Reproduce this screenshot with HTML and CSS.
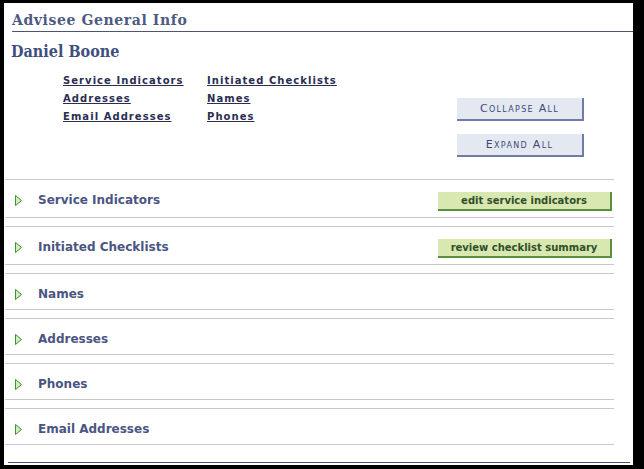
FILE: index.html
```html
<!DOCTYPE html>
<html>
<head>
<meta charset="utf-8">
<link rel="stylesheet" href="styles.css">
</head>
<body>
<div class="panel">
  <div class="page-head"><h1 class="page-title">Advisee General Info</h1></div>
  <h2 class="person">Daniel Boone</h2>
  <div class="top">
    <div class="links">
      <a href="#" class="link">Service Indicators</a>
      <a href="#" class="link">Initiated Checklists</a>
      <a href="#" class="link">Addresses</a>
      <a href="#" class="link">Names</a>
      <a href="#" class="link">Email Addresses</a>
      <a href="#" class="link">Phones</a>
    </div>
    <div class="toggles">
      <button class="btn-blue">Collapse All</button>
      <button class="btn-blue">Expand All</button>
    </div>
  </div>
  <div class="sections">
    <div class="section">
      <div class="sec-row">
        <svg class="tri" width="7" height="11" viewBox="0 0 7 11"><polygon points="0.5,0.5 6.5,5.5 0.5,10.5" fill="#cfeebb" stroke="#3f8f33" stroke-width="1"/></svg>
        <span class="sec-title">Service Indicators</span>
        <button class="btn-green">edit service indicators</button>
      </div>
    </div>
    <div class="section">
      <div class="sec-row">
        <svg class="tri" width="7" height="11" viewBox="0 0 7 11"><polygon points="0.5,0.5 6.5,5.5 0.5,10.5" fill="#cfeebb" stroke="#3f8f33" stroke-width="1"/></svg>
        <span class="sec-title">Initiated Checklists</span>
        <button class="btn-green">review checklist summary</button>
      </div>
    </div>
    <div class="section">
      <div class="sec-row">
        <svg class="tri" width="7" height="11" viewBox="0 0 7 11"><polygon points="0.5,0.5 6.5,5.5 0.5,10.5" fill="#cfeebb" stroke="#3f8f33" stroke-width="1"/></svg>
        <span class="sec-title">Names</span>
      </div>
    </div>
    <div class="section">
      <div class="sec-row">
        <svg class="tri" width="7" height="11" viewBox="0 0 7 11"><polygon points="0.5,0.5 6.5,5.5 0.5,10.5" fill="#cfeebb" stroke="#3f8f33" stroke-width="1"/></svg>
        <span class="sec-title">Addresses</span>
      </div>
    </div>
    <div class="section">
      <div class="sec-row">
        <svg class="tri" width="7" height="11" viewBox="0 0 7 11"><polygon points="0.5,0.5 6.5,5.5 0.5,10.5" fill="#cfeebb" stroke="#3f8f33" stroke-width="1"/></svg>
        <span class="sec-title">Phones</span>
      </div>
    </div>
    <div class="section">
      <div class="sec-row">
        <svg class="tri" width="7" height="11" viewBox="0 0 7 11"><polygon points="0.5,0.5 6.5,5.5 0.5,10.5" fill="#cfeebb" stroke="#3f8f33" stroke-width="1"/></svg>
        <span class="sec-title">Email Addresses</span>
      </div>
    </div>
  </div>
  <div class="foot-line"></div>
</div>
</body>
</html>
```
FILE: styles.css
```css
html, body {
  margin: 0;
  padding: 0;
  background: #000;
}
body {
  padding: 3px 11px 4px 4px;
  width: 629px;
}
.panel {
  background: #fff;
  width: 629px;
  height: 462px;
  overflow: hidden;
  display: flex;
  flex-direction: column;
}
.page-head {
  margin: 7px 0 0 8px;
  padding-bottom: 1px;
  border-bottom: 1px solid #4d5670;
}
.page-title {
  margin: 0;
  font-family: "DejaVu Serif", serif;
  font-weight: bold;
  font-size: 14px;
  line-height: 20px;
  letter-spacing: 0.6px;
  color: #4d5a82;
}
.person {
  margin: 9px 0 0 7px;
  font-family: "DejaVu Serif Condensed", "DejaVu Serif", serif;
  font-stretch: condensed;
  font-weight: bold;
  font-size: 16px;
  line-height: 22px;
  color: #3e4f7d;
}
.top {
  display: flex;
  margin-top: 9px;
}
.links {
  display: grid;
  grid-template-columns: 144px auto;
  grid-auto-rows: 18px;
  margin-left: 59px;
  align-content: start;
}
.link {
  font-family: "DejaVu Sans", sans-serif;
  font-weight: bold;
  font-size: 10px;
  letter-spacing: 1.05px;
  line-height: 18px;
  color: #2b2e50;
  text-decoration: underline;
}
.toggles {
  margin-left: auto;
  margin-right: 49px;
  padding-top: 26px;
  display: flex;
  flex-direction: column;
  gap: 13px;
}
.btn-blue {
  width: 127px;
  height: 23px;
  padding: 0;
  margin: 0;
  background: #e4e8f1;
  border: none;
  border-right: 2px solid #6f7ca6;
  border-bottom: 2px solid #6f7ca6;
  font-family: "DejaVu Sans", sans-serif;
  font-variant: small-caps;
  font-size: 11px;
  letter-spacing: 1.3px;
  color: #3d4a7a;
}
.sections {
  margin: 22px 0 0 1px;
  width: 609px;
  display: flex;
  flex-direction: column;
  gap: 8px;
}
.section {
  border-top: 1px solid #c8c9cc;
  border-bottom: 1px solid #c8c9cc;
}
.sec-row {
  display: flex;
  align-items: flex-start;
  padding: 12px 0 6px 0;
}
.tri {
  margin: 3px 0 0 10px;
  flex: none;
}
.sec-title {
  margin-left: 16px;
  font-family: "DejaVu Sans", sans-serif;
  font-weight: bold;
  font-size: 12px;
  line-height: 17px;
  color: #4b5583;
}
.btn-green {
  margin: 0 2px 0 auto;
  width: 174px;
  height: 19px;
  padding: 0;
  background: #d8e8b0;
  border: none;
  border-right: 2px solid #5a8f3c;
  border-bottom: 2px solid #5a8f3c;
  font-family: "DejaVu Sans", sans-serif;
  font-weight: bold;
  font-size: 10px;
  color: #2f4f2a;
}
.foot-line {
  margin: auto 3px 2px 4px;
  border-top: 1px solid #4d5670;
}
```
